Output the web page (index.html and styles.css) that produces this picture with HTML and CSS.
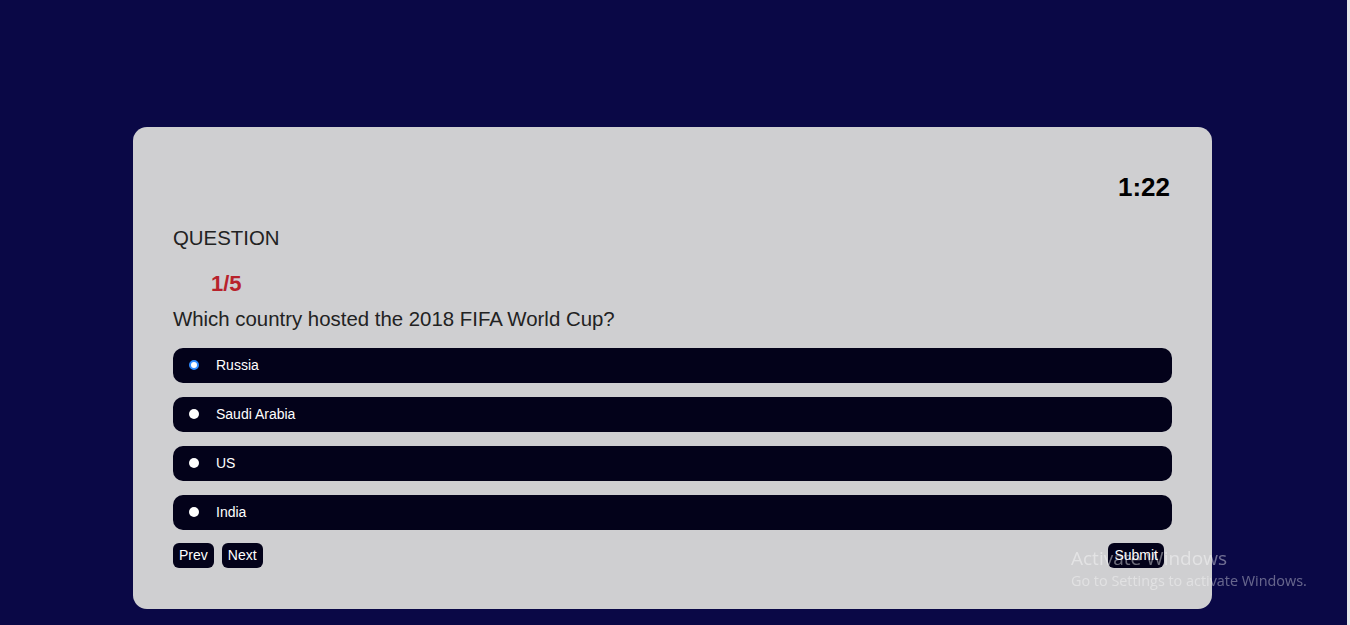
FILE: index.html
```html
<!DOCTYPE html>
<html lang="en">
<head>
<meta charset="utf-8">
<title>Quiz</title>
<link rel="stylesheet" href="styles.css">
</head>
<body>
<main class="card">
  <div class="timer">1:22</div>
  <div class="label">QUESTION</div>
  <div class="count">1/5</div>
  <div class="question">Which country hosted the 2018 FIFA World Cup?</div>
  <div class="options">
    <label class="option"><input type="radio" name="q" checked><span>Russia</span></label>
    <label class="option"><input type="radio" name="q"><span>Saudi Arabia</span></label>
    <label class="option"><input type="radio" name="q"><span>US</span></label>
    <label class="option"><input type="radio" name="q"><span>India</span></label>
  </div>
  <div class="controls">
    <div class="nav">
      <button class="btn">Prev</button>
      <button class="btn">Next</button>
    </div>
    <button class="btn submit">Submit</button>
  </div>
</main>
<div class="watermark">
  <div class="wm-title">Activate Windows</div>
  <div class="wm-sub">Go to Settings to activate Windows.</div>
</div>
<div class="edge"></div>
</body>
</html>
```

FILE: styles.css
```css
html, body {
  margin: 0;
  padding: 0;
}
body {
  background: #0a0846;
  font-family: "Liberation Sans", Arial, sans-serif;
  min-height: 625px;
  overflow: hidden;
}
.card {
  box-sizing: border-box;
  margin: 127px 0 0 133px;
  width: 1079px;
  height: 482px;
  background: #cfcfd1;
  border-radius: 14px;
  padding: 45px 40px 0 40px;
  display: flex;
  flex-direction: column;
}
.timer {
  text-align: right;
  font-size: 26px;
  font-weight: bold;
  color: #000;
  line-height: 30px;
  margin-right: 2px;
}
.label {
  margin-top: 25px;
  font-size: 20.4px;
  line-height: 23px;
  color: #222;
}
.count {
  margin-top: 21px;
  margin-left: 38px;
  font-size: 22px;
  font-weight: bold;
  line-height: 25px;
  color: #b8222b;
}
.question {
  margin-top: 12px;
  font-size: 20.4px;
  line-height: 23px;
  color: #222;
}
.options {
  margin-top: 17px;
  display: flex;
  flex-direction: column;
  gap: 14px;
}
.option {
  height: 35px;
  background: #03021a;
  border-radius: 10px;
  display: flex;
  align-items: center;
  padding-left: 16px;
  color: #fff;
  font-size: 14px;
  line-height: 16px;
  padding-bottom: 1px;
  box-sizing: border-box;
}
.option input {
  appearance: none;
  -webkit-appearance: none;
  margin: 0;
  width: 10px;
  height: 10px;
  border-radius: 50%;
  background: #fff;
  box-sizing: border-box;
}
.option input:checked {
  border: 2.5px solid #2f8cff;
}
.option span {
  margin-left: 17px;
}
.controls {
  margin-top: 13px;
  display: flex;
  justify-content: space-between;
  align-items: flex-start;
}
.nav {
  display: flex;
  gap: 8px;
}
.btn {
  height: 25px;
  padding: 0 6px 1px;
  border: none;
  border-radius: 6px;
  background: #03021a;
  color: #fff;
  font-family: "Liberation Sans", Arial, sans-serif;
  font-size: 14px;
}
.submit {
  margin-right: 8px;
}
.watermark {
  position: fixed;
  left: 1071px;
  top: 546px;
  color: rgba(255, 255, 255, 0.42);
  font-family: "Open Sans", "Noto Sans", sans-serif;
  pointer-events: none;
}
.wm-title {
  font-size: 19px;
  line-height: 24px;
}
.wm-sub {
  font-size: 14.4px;
  line-height: 21px;
  color: rgba(255, 255, 255, 0.38);
}
.edge {
  position: fixed;
  top: 0;
  right: 0;
  width: 3px;
  height: 625px;
  background: #e8e8ea;
}
```
